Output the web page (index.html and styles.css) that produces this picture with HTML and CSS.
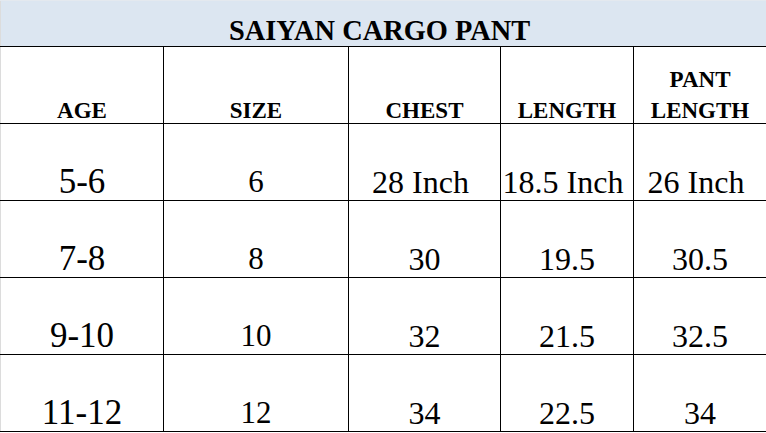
FILE: index.html
```html
<!DOCTYPE html>
<html>
<head>
<meta charset="utf-8">
<link rel="stylesheet" href="styles.css">
</head>
<body>
<table class="chart">
  <colgroup>
    <col class="c1"><col class="c2"><col class="c3"><col class="c4"><col class="c5">
  </colgroup>
  <tr class="title-row"><th colspan="5" class="title">SAIYAN CARGO PANT</th></tr>
  <tr class="head-row">
    <th><div class="hd">AGE</div></th>
    <th><div class="hd">SIZE</div></th>
    <th><div class="hd">CHEST</div></th>
    <th><div class="hd">LENGTH</div></th>
    <th><div class="hd">PANT<br>LENGTH</div></th>
  </tr>
  <tr class="data-row"><td class="age">5-6</td><td class="sm">6</td><td class="inch">28 Inch</td><td class="inch">18.5 Inch</td><td class="inch">26 Inch</td></tr>
  <tr class="data-row"><td class="age">7-8</td><td class="sm">8</td><td>30</td><td>19.5</td><td>30.5</td></tr>
  <tr class="data-row"><td class="age">9-10</td><td class="sm">10</td><td>32</td><td>21.5</td><td>32.5</td></tr>
  <tr class="data-row"><td class="age">11-12</td><td class="sm">12</td><td>34</td><td>22.5</td><td>34</td></tr>
</table>
</body>
</html>
```
FILE: styles.css
```css
html, body {
  margin: 0;
  padding: 0;
  background: #ffffff;
}
.chart {
  border-collapse: collapse;
  table-layout: fixed;
  width: 766px;
  font-family: "Liberation Serif", "Times New Roman", serif;
  color: #000;
}
.c1 { width: 163px; }
.c2 { width: 185px; }
.c3 { width: 152px; }
.c4 { width: 133px; }
.c5 { width: 133px; }
.chart th, .chart td {
  padding: 0 2px;
  text-align: center;
  border: 1px solid #000;
  overflow: visible;
  white-space: nowrap;
}
.chart tr > :first-child { border-left: 1px solid #dcdcdc; }
.title-row .title {
  height: 46px;
  background: #dce6f1;
  font-size: 28.4px;
  font-weight: bold;
  vertical-align: bottom;
  padding: 0 8px 0 0;
  border-top: 1px solid #e4e9ef;
  border-left: 1px solid #dcdcdc;
  box-sizing: border-box;
  line-height: 30px;
}
.head-row th {
  height: 76px;
  font-size: 23px;
  font-weight: bold;
  vertical-align: bottom;
  line-height: 31px;
  padding-bottom: 0;
}
.hd { margin-bottom: -3px; }
.data-row td {
  height: 76px;
  font-size: 32px;
  vertical-align: bottom;
  line-height: 36px;
  padding-bottom: 0;
}
.data-row td.age { font-size: 35px; }
.data-row td.sm { font-size: 31px; }
.data-row td.inch { padding-right: 8px; padding-left: 0; }
```
